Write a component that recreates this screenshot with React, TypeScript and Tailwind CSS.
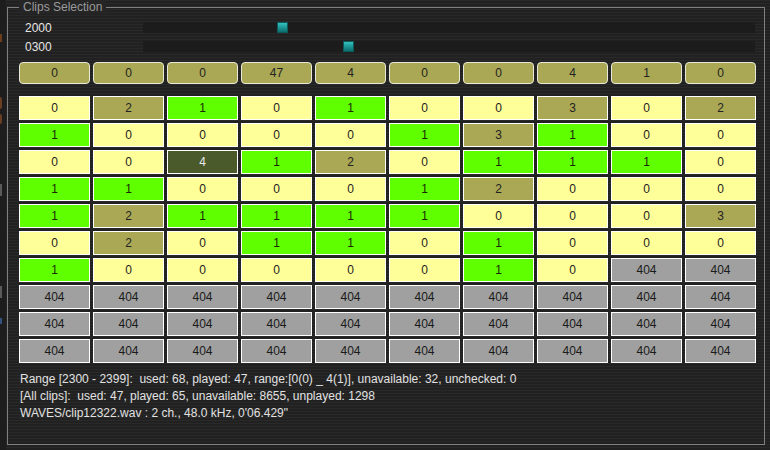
const header = [0, 0, 0, 47, 4, 0, 0, 4, 1, 0];

const rows: number[][] = [
  [0, 2, 1, 0, 1, 0, 0, 3, 0, 2],
  [1, 0, 0, 0, 0, 1, 3, 1, 0, 0],
  [0, 0, 4, 1, 2, 0, 1, 1, 1, 0],
  [1, 1, 0, 0, 0, 1, 2, 0, 0, 0],
  [1, 2, 1, 1, 1, 1, 0, 0, 0, 3],
  [0, 2, 0, 1, 1, 0, 1, 0, 0, 0],
  [1, 0, 0, 0, 0, 0, 1, 0, 404, 404],
  [404, 404, 404, 404, 404, 404, 404, 404, 404, 404],
  [404, 404, 404, 404, 404, 404, 404, 404, 404, 404],
  [404, 404, 404, 404, 404, 404, 404, 404, 404, 404],
];

const sliders = [
  { label: "2000", thumb: 134 },
  { label: "0300", thumb: 200 },
];

// colour of a clip cell by its count
function cellColor(n: number) {
  if (n === 404) return "bg-[#a0a0a0] text-[#1a1a1a]";
  if (n === 0) return "bg-[#ffff99] text-[#222]";
  if (n === 1) return "bg-[#5fff00] text-[#1a2a00]";
  if (n === 4) return "bg-[#4b5a2a] text-[#e8e8e8]";
  return "bg-[#aaa855] text-[#222]";
}

export default function App() {
  return (
    <div className="w-[770px] h-[450px] flex overflow-hidden font-['Liberation_Sans',Arial,sans-serif] text-[12px] bg-[repeating-linear-gradient(to_bottom,#292929_0px,#292929_1px,#212121_1px,#212121_3px)]">
      {/* sliver of the neighbouring panel */}
      <div className="w-[6px] h-full bg-[#1d1d1d] flex flex-col shrink-0">
        <div className="h-[34px]" />
        <div className="w-[2px] h-[8px] bg-[#6a3e1c]" />
        <div className="h-[55px]" />
        <div className="w-[2px] h-[12px] bg-[#6a3e22] rounded-r" />
        <div className="h-[5px]" />
        <div className="w-[2px] h-[10px] bg-[#6a3e22] rounded-r" />
        <div className="h-[60px]" />
        <div className="w-[2px] h-[12px] bg-[#5a5a5a]" />
        <div className="h-[90px]" />
        <div className="w-[2px] h-[12px] bg-[#5a5a5a]" />
        <div className="h-[20px]" />
        <div className="w-[2px] h-[6px] bg-[#34507f]" />
      </div>

      <div className="relative mt-[7px] ml-[1px] w-[758px] h-[438px] border border-[#808080] shrink-0">
        <span className="absolute left-[11px] -top-[8px] px-[4px] leading-[14px] text-[#9a9a9a] bg-[#252525]">
          Clips Selection
        </span>

        <div className="pt-[10px] flex flex-col">
          {sliders.map((s) => (
            <div key={s.label} className="h-[19px] flex items-center">
              <span className="w-[118px] pl-[17px] text-[#e6e6e6] box-content">{s.label}</span>
              <div className="relative w-[612px] h-[11px] bg-[#1c1c1c]">
                <div
                  className="absolute top-0 w-[11px] h-[11px] bg-linear-to-b from-[#34c0c0] to-[#0a6e6e] border border-[#0d5a5a]"
                  style={{ left: s.thumb }}
                />
              </div>
            </div>
          ))}
        </div>

        <div className="mt-[6px] pl-[11px] flex gap-[3px]">
          {header.map((n, i) => (
            <div
              key={i}
              className="w-[71px] h-[22px] rounded-[4px] border border-[#e8e8d8] bg-[#aaa855] text-[#222] flex items-center justify-center"
            >
              {n}
            </div>
          ))}
        </div>

        <div className="mt-[12px] pl-[11px] flex flex-col gap-[3px]">
          {rows.map((r, ri) => (
            <div key={ri} className="flex gap-[3px]">
              {r.map((n, ci) => (
                <div
                  key={ci}
                  className={`w-[71px] h-[24px] border border-white flex items-center justify-center ${cellColor(n)}`}
                >
                  {n}
                </div>
              ))}
            </div>
          ))}
        </div>

        <div className="mt-[8px] pl-[12px] flex flex-col text-[#e2e2e2] leading-[17px]">
          <span>Range [2300 - 2399]:&nbsp; used: 68, played: 47, range:[0(0) _ 4(1)], unavailable: 32, unchecked: 0</span>
          <span>[All clips]:&nbsp; used: 47, played: 65, unavailable: 8655, unplayed: 1298</span>
          <span>WAVES/clip12322.wav : 2 ch., 48.0 kHz, 0'06.429"</span>
        </div>
      </div>
    </div>
  );
}
